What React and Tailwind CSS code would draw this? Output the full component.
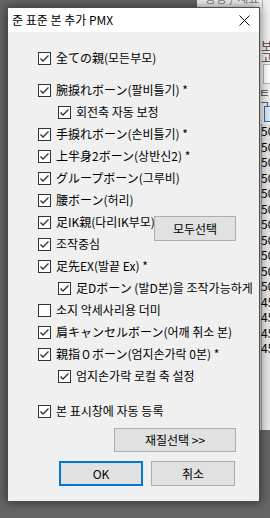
import React from 'react';

const rows = [
  { label: '腕捩れボーン(팔비틀기) *', checked: true },
  { label: '회전축 자동 보정', checked: true, sub: true },
  { label: '手捩れボーン(손비틀기) *', checked: true },
  { label: '上半身2ボーン(상반신2) *', checked: true },
  { label: 'グループボーン(그루비)', checked: true },
  { label: '腰ボーン(허리)', checked: true },
  { label: '足IK親(다리IK부모)', checked: true, selectAll: true },
  { label: '조작중심', checked: true },
  { label: '足先EX(발끝 Ex) *', checked: true },
  { label: '足Dボーン (발D본)을 조작가능하게', checked: true, sub: true },
  { label: '소지 악세사리용 더미', checked: false },
  { label: '肩キャンセルボーン(어깨 취소 본)', checked: true },
  { label: '親指０ボーン(엄지손가락 0본) *', checked: true },
  { label: '엄지손가락 로컬 축 설정', checked: true, sub: true },
];

const numbers = ['50.', '50.', '50.', '50.', '50.', '50.', '50.', '50.', '50.', '50.', '50.', '450', '450', '450', '450'];

function Checkbox({ checked }) {
  return (
    <span className="w-[13px] h-[13px] shrink-0 border border-[#333333] bg-white flex items-center justify-center">
      {checked && (
        <svg width="11" height="11" viewBox="0 0 11 11">
          <polyline points="1.5,5.5 4,8 9.5,2.5" fill="none" stroke="#333333" strokeWidth="1.4" />
        </svg>
      )}
    </span>
  );
}

function Row({ label, checked, sub, selectAll }) {
  return (
    <div className={`relative h-[22px] flex items-center gap-[5px] whitespace-nowrap ${sub ? 'ml-[20px]' : ''}`}>
      <Checkbox checked={checked} />
      <span className="leading-none">{label}</span>
      {selectAll && (
        <button className="absolute left-[116px] top-[5px] w-[82px] h-[25px] bg-[#e1e1e1] border border-[#adadad] leading-none">
          모두선택
        </button>
      )}
    </div>
  );
}

export default function App() {
  return (
    <div className="relative w-[270px] h-[518px] overflow-hidden bg-[#656565] text-[12px] text-black [font-family:'Noto_Sans_CJK_KR','Noto_Sans_CJK_JP',sans-serif]">
      {/* window behind the dialog */}
      <div className="absolute left-[197px] top-0 w-[80px] h-[430px] bg-[#f0f0f0] text-[#444]">
        <div className="absolute left-[8px] top-[-8px] whitespace-nowrap leading-none text-[#777]">응용 / 제료</div>
        <div className="absolute left-[65px] top-0 w-px h-[9px] bg-[#b5b5b5]" />
        <div className="absolute left-[64px] top-[40px] leading-none">보고</div>
        <div className="absolute left-[66px] top-[64px] w-[20px] h-[20px] border border-[#b5b5b5] bg-white" />
        <div className="absolute left-[62px] top-[87px] leading-none">ㅌ ㄱ</div>
        <div className="absolute left-[67px] top-[106px] w-[20px] h-[16px] border border-[#2f6fb5] bg-[#dbe8f5]" />
        <div className="absolute left-[64px] top-[124px] w-[20px] h-[306px] bg-[#e6e6e6] border-l border-[#a0a0a0] flex flex-col pt-[1px]">
          {numbers.map((n, i) => (
            <div key={i} className="h-[15.5px] leading-none text-[12px] text-black -ml-[1px]">{n}</div>
          ))}
        </div>
      </div>

      {/* dialog */}
      <div className="absolute left-[7px] top-[7px] w-[253px] h-[495px] bg-[#f0f0f0] border border-[#4d4d4d] shadow-[0_0_10px_rgba(0,0,0,0.55)] overflow-hidden flex flex-col">
        <div className="h-[24px] shrink-0 bg-white flex items-center justify-between pl-[4px] pr-[9px]">
          <span className="leading-none">준 표준 본 추가 PMX</span>
          <svg width="11" height="11" viewBox="0 0 11 11">
            <path d="M0.5 0.5 L10.5 10.5 M10.5 0.5 L0.5 10.5" stroke="#111" strokeWidth="1" />
          </svg>
        </div>

        <div className="flex flex-col pl-[30px] pt-[15px]">
          <Row label="全ての親(모든부모)" checked />
          <div className="h-[10px]" />
          {rows.map((r, i) => (
            <Row key={i} {...r} />
          ))}
          <div className="h-[13px]" />
          <Row label="본 표시창에 자동 등록" checked />

          <button className="mt-[6px] ml-[76px] w-[122px] h-[24px] bg-[#e1e1e1] border border-[#adadad] leading-none">
            재질선택 &gt;&gt;
          </button>

          <div className="mt-[9px] ml-[21px] flex gap-[8px]">
            <button className="w-[84px] h-[25px] bg-[#e1e1e1] border-2 border-[#0078d7] leading-none">OK</button>
            <button className="w-[84px] h-[25px] bg-[#e1e1e1] border border-[#adadad] leading-none">취소</button>
          </div>
        </div>
      </div>
    </div>
  );
}
